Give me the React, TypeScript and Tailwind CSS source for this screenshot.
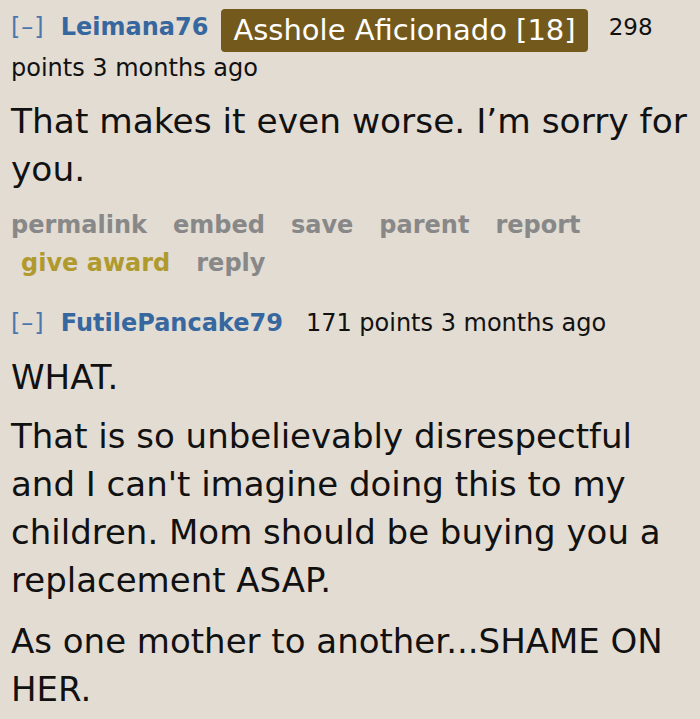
import React from 'react'

const font = { fontFamily: '"DejaVu Sans", Verdana, sans-serif' }

function Header({ author, children }: { author: string; children?: React.ReactNode }) {
    return (
        <div className="flex items-start">
            <span className="mt-[11px] text-[24px] leading-[32px] text-[#4b77ae] tracking-[1px]">[–]</span>
            <span className="mt-[11px] ml-[16px] text-[24px] leading-[32px] font-bold text-[#37679f]">{author}</span>
            {children}
        </div>
    )
}

export default function App() {
    return (
        <div className="w-[700px] h-[719px] overflow-hidden bg-[#e2dcd3] pl-[11px] text-[#111]" style={font}>

            {/*=================================*/}
            {/*FIRST COMMENT*/}
            {/*=================================*/}
            <Header author="Leimana76">
                <span className="mt-[9px] ml-[13px] h-[43px] px-[12px] rounded-[4px] bg-[#735a1c] text-white text-[29px] leading-[43px] whitespace-nowrap">
                    Asshole Aficionado [18]
                </span>
                <span className="mt-[11px] ml-[21px] text-[23px] leading-[32px]">298</span>
            </Header>
            <div className="text-[24px] leading-[32px]">points 3 months ago</div>

            <div className="mt-[13px] text-[34.4px] leading-[48px]">
                That makes it even worse. I’m sorry for you.
            </div>

            {/*=================================*/}
            {/*ACTIONS*/}
            {/*=================================*/}
            <div className="mt-[13px] text-[24px] leading-[38px] font-bold text-[#888]">
                <div className="flex gap-[26px]">
                    <span>permalink</span>
                    <span>embed</span>
                    <span>save</span>
                    <span>parent</span>
                    <span>report</span>
                </div>
                <div className="flex gap-[26px] pl-[10px]">
                    <span className="text-[#b09a2e]">give award</span>
                    <span>reply</span>
                </div>
            </div>

            {/*=================================*/}
            {/*SECOND COMMENT*/}
            {/*=================================*/}
            <div className="mt-[14px]">
                <Header author="FutilePancake79">
                    <span className="mt-[11px] ml-[23px] text-[24px] leading-[32px]">171 points 3 months ago</span>
                </Header>
            </div>

            <div className="mt-[14px] text-[34px] leading-[48px]">
                <p className="mb-[11px]">WHAT.</p>
                <p>That is so unbelievably disrespectful and I can't imagine doing this to my children. Mom should be buying you a replacement ASAP.</p>
                <p className="mt-[13px]">As one mother to another...SHAME ON HER.</p>
            </div>
        </div>
    )
}
